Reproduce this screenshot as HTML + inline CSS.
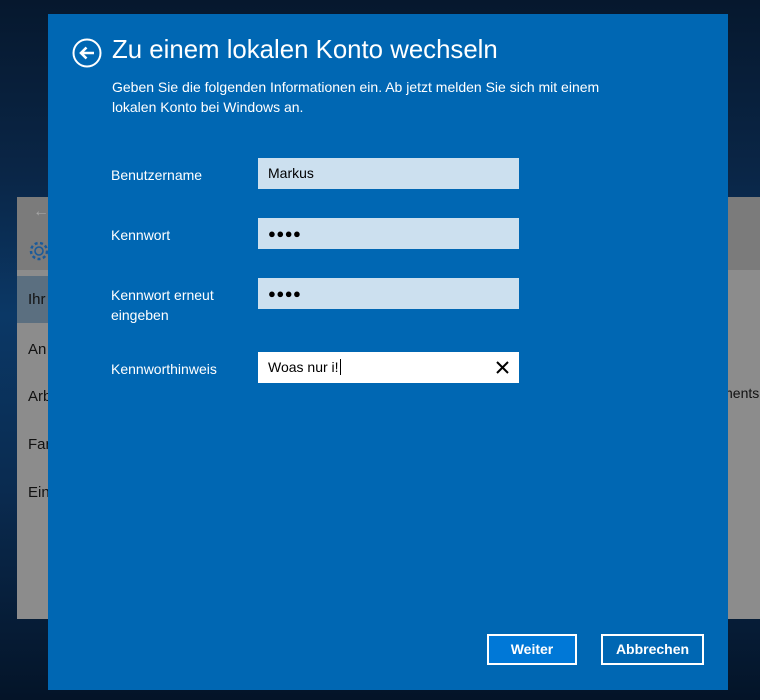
<!DOCTYPE html>
<html><head><style>
body{margin:0;width:760px;height:700px;overflow:hidden;position:relative;font-family:"Liberation Sans",sans-serif;
background:linear-gradient(180deg,#06182e 0%,#0a2647 25%,#0b3866 45%,#0a2b50 70%,#041428 100%);}
.bgwin{position:absolute;left:17px;top:197px;width:743px;height:422px;background:#8c8c8c;}
.bgtop{position:absolute;left:0;top:0;width:100%;height:73px;background:#7b7b7b;}
.sel{position:absolute;left:0;top:79px;width:40px;height:47px;background:#5b6f80;}
.nav{position:absolute;left:11px;font-size:15px;color:#111;}
.dlg{position:absolute;left:48px;top:14px;width:680px;height:676px;background:#0067b3;color:#fff;}
h1{position:absolute;left:64px;top:22px;margin:0;font-weight:normal;font-size:25.8px;}
.desc{position:absolute;left:64px;top:63px;font-size:14px;line-height:20px;width:530px;}
.lbl{position:absolute;left:63px;font-size:14px;line-height:20px;}
.in{position:absolute;left:210px;width:261px;height:31px;background:#cce0ef;color:#000;font-size:14px;line-height:31px;box-sizing:border-box;padding-left:10px;}
.btn{position:absolute;top:620px;height:31px;box-sizing:border-box;border:2px solid #fff;font-size:14px;font-weight:bold;text-align:center;line-height:27px;}
</style></head><body>
<div class="bgwin"><div class="bgtop"></div><div class="sel"></div>
<div style="position:absolute;left:16px;top:6px;color:#a5a5a5;font-size:16px">←</div>
<svg style="position:absolute;left:11px;top:43px" width="22" height="22" viewBox="0 0 22 22"><circle cx="11" cy="11" r="4" fill="none" stroke="#1a5a9a" stroke-width="1.6"/><circle cx="11" cy="11" r="8" fill="none" stroke="#1a5a9a" stroke-width="2.5" stroke-dasharray="3 2.5"/></svg>
<div class="nav" style="top:94px">Ihr</div><div class="nav" style="top:144px">An</div><div class="nav" style="top:191px">Arb</div><div class="nav" style="top:239px">Fan</div><div class="nav" style="top:287px">Ein</div>
<div style="position:absolute;left:708px;top:188px;font-size:14px;color:#111">nents</div>
</div>
<div class="dlg">
<svg style="position:absolute;left:24px;top:24px" width="30" height="30" viewBox="0 0 30 30"><circle cx="15" cy="15" r="13.5" fill="none" stroke="#fff" stroke-width="2"/><path d="M22 15H9M14.5 9.5L9 15l5.5 5.5" fill="none" stroke="#fff" stroke-width="2.6"/></svg>
<h1>Zu einem lokalen Konto wechseln</h1>
<div class="desc">Geben Sie die folgenden Informationen ein. Ab jetzt melden Sie sich mit einem<br>lokalen Konto bei Windows an.</div>
<div class="lbl" style="top:151px">Benutzername</div>
<div class="lbl" style="top:211px">Kennwort</div>
<div class="lbl" style="top:271px">Kennwort erneut<br>eingeben</div>
<div class="lbl" style="top:345px">Kennworthinweis</div>
<div class="in" style="top:144px">Markus</div>
<div class="in" style="top:204px;font-size:13px;letter-spacing:0.5px">●●●●</div>
<div class="in" style="top:264px;font-size:13px;letter-spacing:0.5px">●●●●</div>
<div class="in" style="top:338px;background:#fff">Woas nur i!<span style="border-left:1px solid #000;margin-left:1px"></span>
<svg style="position:absolute;right:10px;top:9px" width="13" height="13"><path d="M1 1L12 12M12 1L1 12" stroke="#000" stroke-width="2"/></svg></div>
<div class="btn" style="left:439px;width:90px;background:#0078d7">Weiter</div>
<div class="btn" style="left:553px;width:103px">Abbrechen</div>
</div>
</body></html>
